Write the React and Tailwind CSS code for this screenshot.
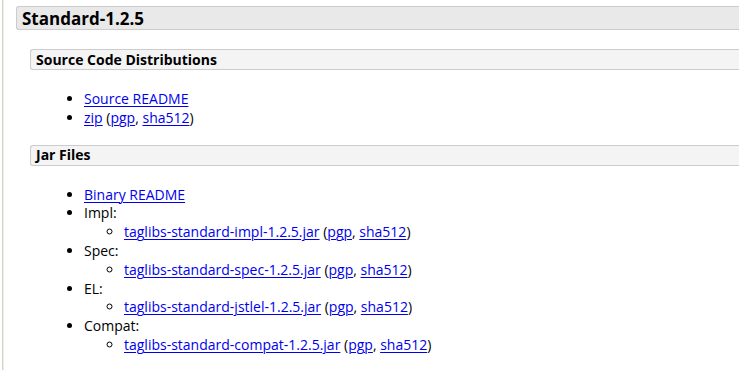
import React from "react";

const font = { fontFamily: '"Open Sans", "Noto Sans", sans-serif' };

const A = ({ children }) => (
  <a href="#" className="text-[#0000ee] underline underline-offset-2 decoration-1">
    {children}
  </a>
);

const Sig = () => (
  <>
    {" "}(<A>pgp</A>, <A>sha512</A>)
  </>
);

const H3 = ({ children }) => (
  <h3 className="ml-[26px] h-[21px] pl-[5px] flex items-center bg-[#f4f4f4] border border-r-0 border-[#cccccc] rounded-l-[3px] text-[14px] font-bold text-black leading-none">
    {children}
  </h3>
);

const Jar = ({ name }) => (
  <ul className="list-[circle] pl-[40px]">
    <li>
      <A>{name}</A>
      <Sig />
    </li>
  </ul>
);

export default function App() {
  return (
    <div className="w-[739px] h-[370px] overflow-hidden bg-white flex" style={font}>
      <div className="w-[2px] bg-white" />
      <div className="w-px bg-[#d6d2ca]" />
      <div className="w-px bg-[#efedea]" />
      <div className="flex-1 pt-[6px] text-[14px] leading-[18.8px] text-black">
        <h2 className="ml-[12px] h-[24px] pl-[5px] flex items-center bg-[#e9e9e9] border border-r-0 border-[#cccccc] rounded-l-[3px] text-[17px] font-bold leading-none">
          Standard-1.2.5
        </h2>

        <div className="mt-[19px]">
          <H3>Source Code Distributions</H3>
          <ul className="list-disc pl-[80px] mt-[20px]">
            <li><A>Source README</A></li>
            <li><A>zip</A><Sig /></li>
          </ul>
        </div>

        <div className="mt-[17px]">
          <H3>Jar Files</H3>
          <ul className="list-disc pl-[80px] mt-[20px]">
            <li><A>Binary README</A></li>
            <li>
              Impl:
              <Jar name="taglibs-standard-impl-1.2.5.jar" />
            </li>
            <li>
              Spec:
              <Jar name="taglibs-standard-spec-1.2.5.jar" />
            </li>
            <li>
              EL:
              <Jar name="taglibs-standard-jstlel-1.2.5.jar" />
            </li>
            <li>
              Compat:
              <Jar name="taglibs-standard-compat-1.2.5.jar" />
            </li>
          </ul>
        </div>
      </div>
    </div>
  );
}
